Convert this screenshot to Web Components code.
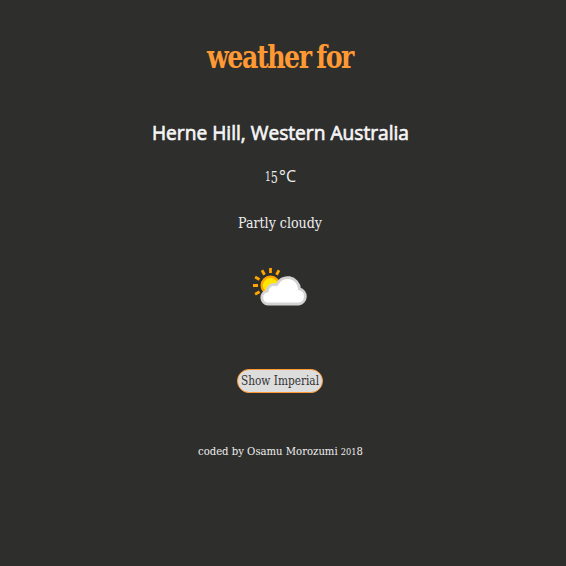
<!DOCTYPE html>
<html lang="en"><head><meta charset="utf-8"><title>Weather</title>
<style>html,body{margin:0;background:#2e2e2c}</style></head>
<body><weather-page></weather-page>
<script>
// Text stretched or condensed horizontally to the width given in its attribute.
class FitText extends HTMLElement{
  connectedCallback(){
    const w=+this.getAttribute('width');
    const r=this.attachShadow({mode:'open'});
    r.innerHTML=`<style>:host{display:block;width:${w}px;white-space:nowrap}
      span{display:inline-block;transform-origin:0 50%}</style><span><slot></slot></span>`;
    const s=r.querySelector('span');
    s.style.transform=`scaleX(${w/s.getBoundingClientRect().width})`;
  }
}
class WeatherIcon extends HTMLElement{
  constructor(){super();this.attachShadow({mode:'open'}).innerHTML=`<style>:host{display:block;width:56px;height:40px}svg{display:block}</style>
  <svg width="56" height="40" viewBox="0 0 56 40">
   <g stroke="#ffa500" stroke-width="2.8"><path d="M18.5 1v5M10 3.3l2.5 4.4M27 3.3l-2.5 4.4M3.1 10l4.4 2.5M1 18.5h5M3.1 27.3l4.5-2.6"/></g>
   <circle cx="18.5" cy="18.5" r="8.8" fill="#ffe600" stroke="#ffa500" stroke-width="2.4"/>
   <path d="M16 37.5a6.5 6.5 0 0 1-.8-12.9a7 7 0 0 1 9.3-6.3a12 12 0 0 1 23 4.1a7.7 7.7 0 0 1-.7 15.1z" fill="#fff" stroke="#d3d3d3" stroke-width="2.8" transform="translate(0 -.5)"/>
  </svg>`}
}
class UnitButton extends HTMLElement{
  constructor(){super();this.attachShadow({mode:'open'}).innerHTML=`<style>:host{display:block}
  button{box-sizing:border-box;width:86px;height:24px;border:1px solid #ff9933;border-radius:12px;background:#ddd;color:#333;padding:0;font:inherit;display:flex;align-items:center;justify-content:center}</style><button><slot></slot></button>`}
}
class WeatherPage extends HTMLElement{
  constructor(){super();this.attachShadow({mode:'open'}).innerHTML=`<style>
  :host{display:flex;flex-direction:column;align-items:center;box-sizing:border-box;width:560px;height:566px;padding-top:37px;color:#eee;font-family:"DejaVu Serif Condensed","DejaVu Serif",serif}
  h1,h2,p{margin:0;font-weight:400}
  h1{font-size:32px;line-height:40px;color:#ff9933;font-weight:700;letter-spacing:-1.6px;word-spacing:-2px}
  h2{font:400 20.5px/28px "Open Sans",sans-serif;margin-top:41px;color:#f5f5f5;-webkit-text-stroke:.7px #f5f5f5}
  .t{display:flex;gap:1px;font-size:16px;line-height:20px;height:20px;margin-top:20px}
  .n{font-size:13px}.five{position:relative;top:2px;font-size:16px}
  .u{font-family:"Open Sans",sans-serif;font-size:17px}
  .c{font-size:15px;line-height:20px;margin-top:27px}
  weather-icon{margin-top:34px}
  unit-button{margin-top:62px;font-size:12px;line-height:16px}
  .f{font-size:11px;line-height:16px;margin-top:51px}
  .o{font-size:9px}.e{font-size:11px}
  </style>
  <h1><fit-text width="146">weather for</fit-text></h1>
  <h2><fit-text width="257">Herne Hill, Western Australia</fit-text></h2>
  <p class="t"><fit-text width="13"><span class="n">1</span><span class="five">5</span></fit-text><fit-text class="u" width="17">°C</fit-text></p>
  <p class="c"><fit-text width="84">Partly cloudy</fit-text></p>
  <weather-icon></weather-icon>
  <unit-button><fit-text width="78">Show Imperial</fit-text></unit-button>
  <p class="f"><fit-text width="165">coded by Osamu Morozumi <span class="o">201</span><span class="e">8</span></fit-text></p>`}
}
customElements.define('fit-text',FitText);
customElements.define('weather-icon',WeatherIcon);
customElements.define('unit-button',UnitButton);
customElements.define('weather-page',WeatherPage);
</script></body></html>
